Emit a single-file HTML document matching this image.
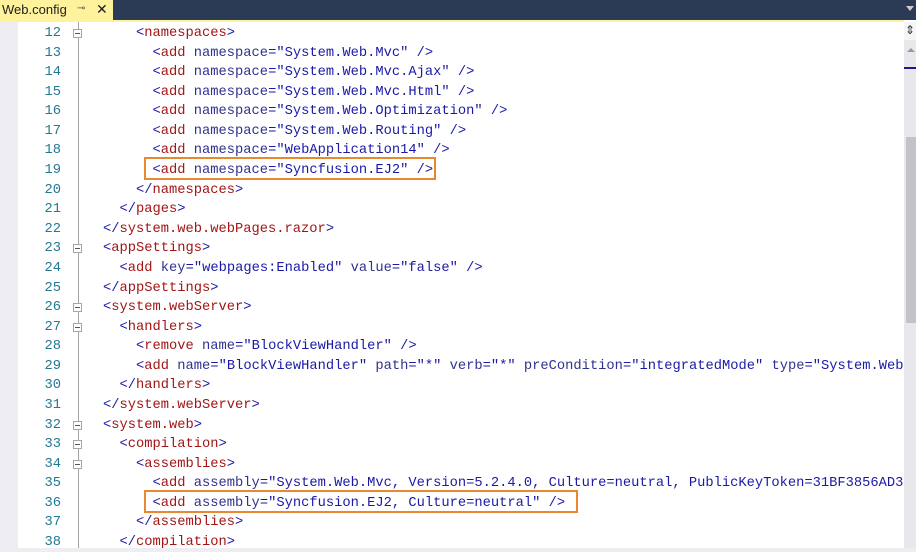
<!DOCTYPE html>
<html><head><meta charset="utf-8"><style>
body{margin:0;width:916px;height:552px;overflow:hidden;background:#fff;position:relative;font-family:"Liberation Mono",monospace}
.bar{position:absolute;left:0;top:0;width:916px;height:20px;background:#2b3a55}
.tab{position:absolute;left:0;top:0;width:113px;height:20px;background:#fff29d;font-family:"Liberation Sans",sans-serif;font-size:13px;color:#1e1e1e}
.yl{position:absolute;left:0;top:20px;width:904px;height:2px;background:#fff29d}
.gut{position:absolute;left:0;top:22px;width:18px;height:530px;background:#eeeef2}
.ln{position:absolute;left:18px;width:43px;text-align:right;font-size:13.75px;color:#237893;line-height:19.58px}
.code{position:absolute;left:103px;font-size:13.75px;line-height:19.58px;white-space:pre;color:#1a1aa6}
.t{color:#a31515}.a{color:#31318f}.b{color:#1a1aa6}
.fold{position:absolute;left:78px;top:22px;width:1px;height:530px;background:#a5a5a5}
.fb{position:absolute;left:73px;width:9px;height:9px;border:1px solid #a5a5a5;background:#fff;box-sizing:border-box}
.fb:after{content:"";position:absolute;left:1px;top:3px;width:5px;height:1px;background:#555}
.box{position:absolute;border:2px solid #e8892f;box-sizing:border-box}
.sb{position:absolute;left:904px;top:22px;width:12px;height:530px;background:#e8e8ec}
.th{position:absolute;left:906px;top:137px;width:10px;height:186px;background:#c2c3c9}
.bot{position:absolute;left:0;top:548px;width:916px;height:4px;background:#eeeef2}
</style></head><body>
<div class="bar"></div>
<div class="tab"><span style="position:absolute;left:2px;top:2px">Web.config</span><span style="position:absolute;left:77px;top:3px;font-size:10px;color:#555">⊸</span><span style="position:absolute;left:96px;top:1px;font-size:14px">✕</span></div>
<div style="position:absolute;left:906px;top:6px;width:0;height:0;border-left:4px solid transparent;border-right:4px solid transparent;border-top:5px solid #ccc"></div>
<div class="yl"></div>
<div class="gut"></div>
<div class="fold"></div>
<div class="ln" style="top:24px">12<br>13<br>14<br>15<br>16<br>17<br>18<br>19<br>20<br>21<br>22<br>23<br>24<br>25<br>26<br>27<br>28<br>29<br>30<br>31<br>32<br>33<br>34<br>35<br>36<br>37<br>38</div>
<div class="fb" style="top:29px"></div>
<div class="fb" style="top:244px"></div>
<div class="fb" style="top:303px"></div>
<div class="fb" style="top:323px"></div>
<div class="fb" style="top:421px"></div>
<div class="fb" style="top:440px"></div>
<div class="fb" style="top:460px"></div>
<div class="code" style="top:24px">    &lt;<span class="t">namespaces</span>&gt;
      &lt;<span class="t">add</span> <span class="a">namespace</span>="System.Web.Mvc" /&gt;
      &lt;<span class="t">add</span> <span class="a">namespace</span>="System.Web.Mvc.Ajax" /&gt;
      &lt;<span class="t">add</span> <span class="a">namespace</span>="System.Web.Mvc.Html" /&gt;
      &lt;<span class="t">add</span> <span class="a">namespace</span>="System.Web.Optimization" /&gt;
      &lt;<span class="t">add</span> <span class="a">namespace</span>="System.Web.Routing" /&gt;
      &lt;<span class="t">add</span> <span class="a">namespace</span>="WebApplication14" /&gt;
      &lt;<span class="t">add</span> <span class="a">namespace</span>="Syncfusion.EJ2" /&gt;
    &lt;/<span class="t">namespaces</span>&gt;
  &lt;/<span class="t">pages</span>&gt;
&lt;/<span class="t">system.web.webPages.razor</span>&gt;
&lt;<span class="t">appSettings</span>&gt;
  &lt;<span class="t">add</span> <span class="a">key</span>="webpages:Enabled" <span class="a">value</span>="false" /&gt;
&lt;/<span class="t">appSettings</span>&gt;
&lt;<span class="t">system.webServer</span>&gt;
  &lt;<span class="t">handlers</span>&gt;
    &lt;<span class="t">remove</span> <span class="a">name</span>="BlockViewHandler" /&gt;
    &lt;<span class="t">add</span> <span class="a">name</span>="BlockViewHandler" <span class="a">path</span>="*" <span class="a">verb</span>="*" <span class="a">preCondition</span>="integratedMode" <span class="a">type</span>="System.Web
  &lt;/<span class="t">handlers</span>&gt;
&lt;/<span class="t">system.webServer</span>&gt;
&lt;<span class="t">system.web</span>&gt;
  &lt;<span class="t">compilation</span>&gt;
    &lt;<span class="t">assemblies</span>&gt;
      &lt;<span class="t">add</span> <span class="a">assembly</span>="System.Web.Mvc, Version=5.2.4.0, Culture=neutral, PublicKeyToken=31BF3856AD3
      &lt;<span class="t">add</span> <span class="a">assembly</span>="Syncfusion.EJ2, Culture=neutral" /&gt;
    &lt;/<span class="t">assemblies</span>&gt;
  &lt;/<span class="t">compilation</span>&gt;</div>
<div class="box" style="left:144px;top:157px;width:292px;height:23px"></div>
<div class="box" style="left:144px;top:490px;width:434px;height:23px"></div>
<div class="sb"></div>
<div style="position:absolute;left:904px;top:22px;width:12px;height:18px;background:#f5f5f5;font-size:12px;color:#333;text-align:center;line-height:18px">⇕</div>
<div style="position:absolute;left:907px;top:48px;width:0;height:0;border-left:4px solid transparent;border-right:4px solid transparent;border-bottom:4px solid #999"></div>
<div style="position:absolute;left:904px;top:67px;width:12px;height:2px;background:#1a1a8c"></div>
<div class="th"></div>
<div class="bot"></div>
</body></html>
